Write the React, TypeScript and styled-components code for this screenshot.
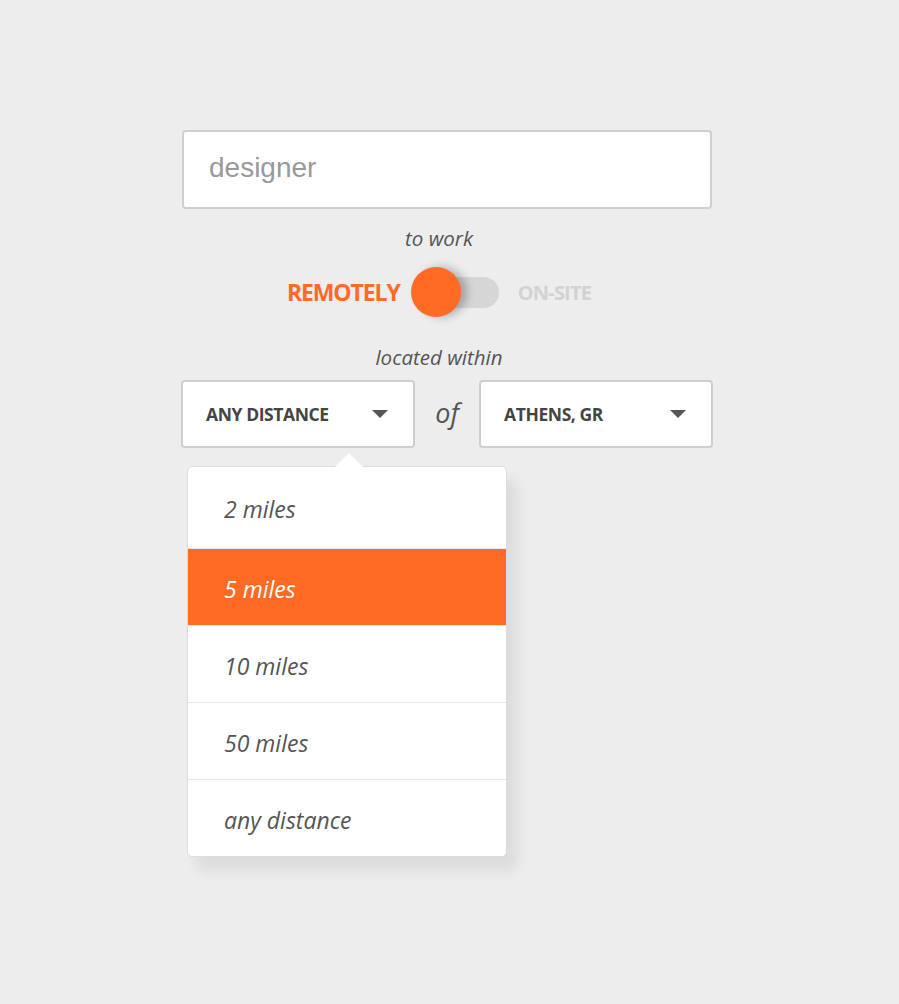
import React from "react";
import styled, { createGlobalStyle } from "styled-components";

const Global = createGlobalStyle`
  html, body { margin: 0; padding: 0; background: #ededed; }
  body { font-family: "Open Sans", sans-serif; }
`;

const Page = styled.div`
  min-height: 1004px;
  padding-top: 130px;
  box-sizing: border-box;
`;

const Form = styled.div`
  width: 532px;
  margin-left: 181px;
  display: flex;
  flex-direction: column;
  align-items: center;
`;

const SearchBox = styled.div`
  box-sizing: border-box;
  width: 530px;
  height: 79px;
  margin-left: 1px;
  align-self: flex-start;
  background: #fff;
  border: 2px solid #cfcfcf;
  border-radius: 4px;
  display: flex;
  align-items: center;
  padding: 0 0 3px 25px;
  font-family: "Liberation Sans", Arial, sans-serif;
  font-size: 28px;
  color: #999;
`;

const Caption = styled.div<{ $top: number }>`
  margin-top: ${(p) => p.$top}px;
  font-style: italic;
  font-size: 20.5px;
  line-height: 26px;
  color: #555;
  margin-right: 16px;
`;

const ToggleRow = styled.div`
  display: flex;
  align-items: center;
  margin-top: 16px;
  height: 50px;
  margin-right: 16px;
`;

const ToggleLabel = styled.span<{ $active?: boolean }>`
  font-weight: 700;
  font-size: ${(p) => (p.$active ? 23 : 20)}px;
  letter-spacing: ${(p) => (p.$active ? -1.1 : -0.8)}px;
  color: ${(p) => (p.$active ? "#ff6b24" : "#d2d2d2")};
`;

const Switch = styled.div`
  position: relative;
  width: 88px;
  height: 50px;
  margin: 0 19px 0 11px;
  display: flex;
  align-items: center;
`;

const Track = styled.div`
  width: 78px;
  height: 31px;
  margin-left: 10px;
  border-radius: 16px;
  background: #d6d6d6;
`;

const Knob = styled.div`
  position: absolute;
  left: 0;
  top: 0;
  width: 50px;
  height: 50px;
  border-radius: 50%;
  background: #ff6b24;
  box-shadow: 6px 0 8px rgba(0, 0, 0, 0.25);
`;

const SelectRow = styled.div`
  display: flex;
  align-items: center;
  margin-top: 10px;
  width: 100%;
  position: relative;
`;

const Select = styled.div`
  position: relative;
  box-sizing: border-box;
  width: 234px;
  height: 68px;
  background: #fff;
  border: 2px solid #cfcfcf;
  border-radius: 4px;
  display: flex;
  align-items: center;
  justify-content: space-between;
  padding: 0 25px 0 23px;
  font-weight: 700;
  font-size: 17.5px;
  letter-spacing: -0.4px;
  color: #444;
`;

const Caret = styled.span`
  width: 0;
  height: 0;
  border-left: 8px solid transparent;
  border-right: 8px solid transparent;
  border-top: 8px solid #555;
`;

const Of = styled.span`
  flex: 1;
  text-align: center;
  font-style: italic;
  font-size: 27px;
  color: #555;
  margin-top: -4px;
`;

const Menu = styled.div`
  position: absolute;
  top: 86px;
  left: 6px;
  width: 320px;
  background: #fff;
  border: 1px solid #dcdcdc;
  border-radius: 5px;
  box-shadow: 10px 14px 14px rgba(0, 0, 0, 0.08);
  box-sizing: border-box;

  &::before {
    content: "";
    position: absolute;
    top: -14px;
    left: 147px;
    border-left: 14px solid transparent;
    border-right: 14px solid transparent;
    border-bottom: 14px solid #fff;
  }
`;

const Item = styled.div<{ $selected?: boolean; $h: number }>`
  height: ${(p) => p.$h}px;
  display: flex;
  align-items: center;
  padding: 3px 0 0 36px;
  font-style: italic;
  font-size: 23px;
  color: ${(p) => (p.$selected ? "#fff" : "#555")};
  background: ${(p) => (p.$selected ? "#ff6b24" : "transparent")};
  border-bottom: 1px solid #e6e6e6;
  box-sizing: border-box;
  &:last-child { border-bottom: none; }
`;

const items = [
  { label: "2 miles", h: 82 },
  { label: "5 miles", h: 77, selected: true },
  { label: "10 miles", h: 77 },
  { label: "50 miles", h: 77 },
  { label: "any distance", h: 76 },
];

export default function App() {
  return (
    <Page>
      <Global />
      <Form>
        <SearchBox>designer</SearchBox>
        <Caption $top={16}>to work</Caption>
        <ToggleRow>
          <ToggleLabel $active>REMOTELY</ToggleLabel>
          <Switch>
            <Track />
            <Knob />
          </Switch>
          <ToggleLabel>ON-SITE</ToggleLabel>
        </ToggleRow>
        <Caption $top={27}>located within</Caption>
        <SelectRow>
          <Select>
            ANY DISTANCE
            <Caret />
          </Select>
          <Of>of</Of>
          <Select>
            ATHENS, GR
            <Caret />
          </Select>
          <Menu>
            {items.map((it) => (
              <Item key={it.label} $selected={it.selected} $h={it.h}>
                {it.label}
              </Item>
            ))}
          </Menu>
        </SelectRow>
      </Form>
    </Page>
  );
}
